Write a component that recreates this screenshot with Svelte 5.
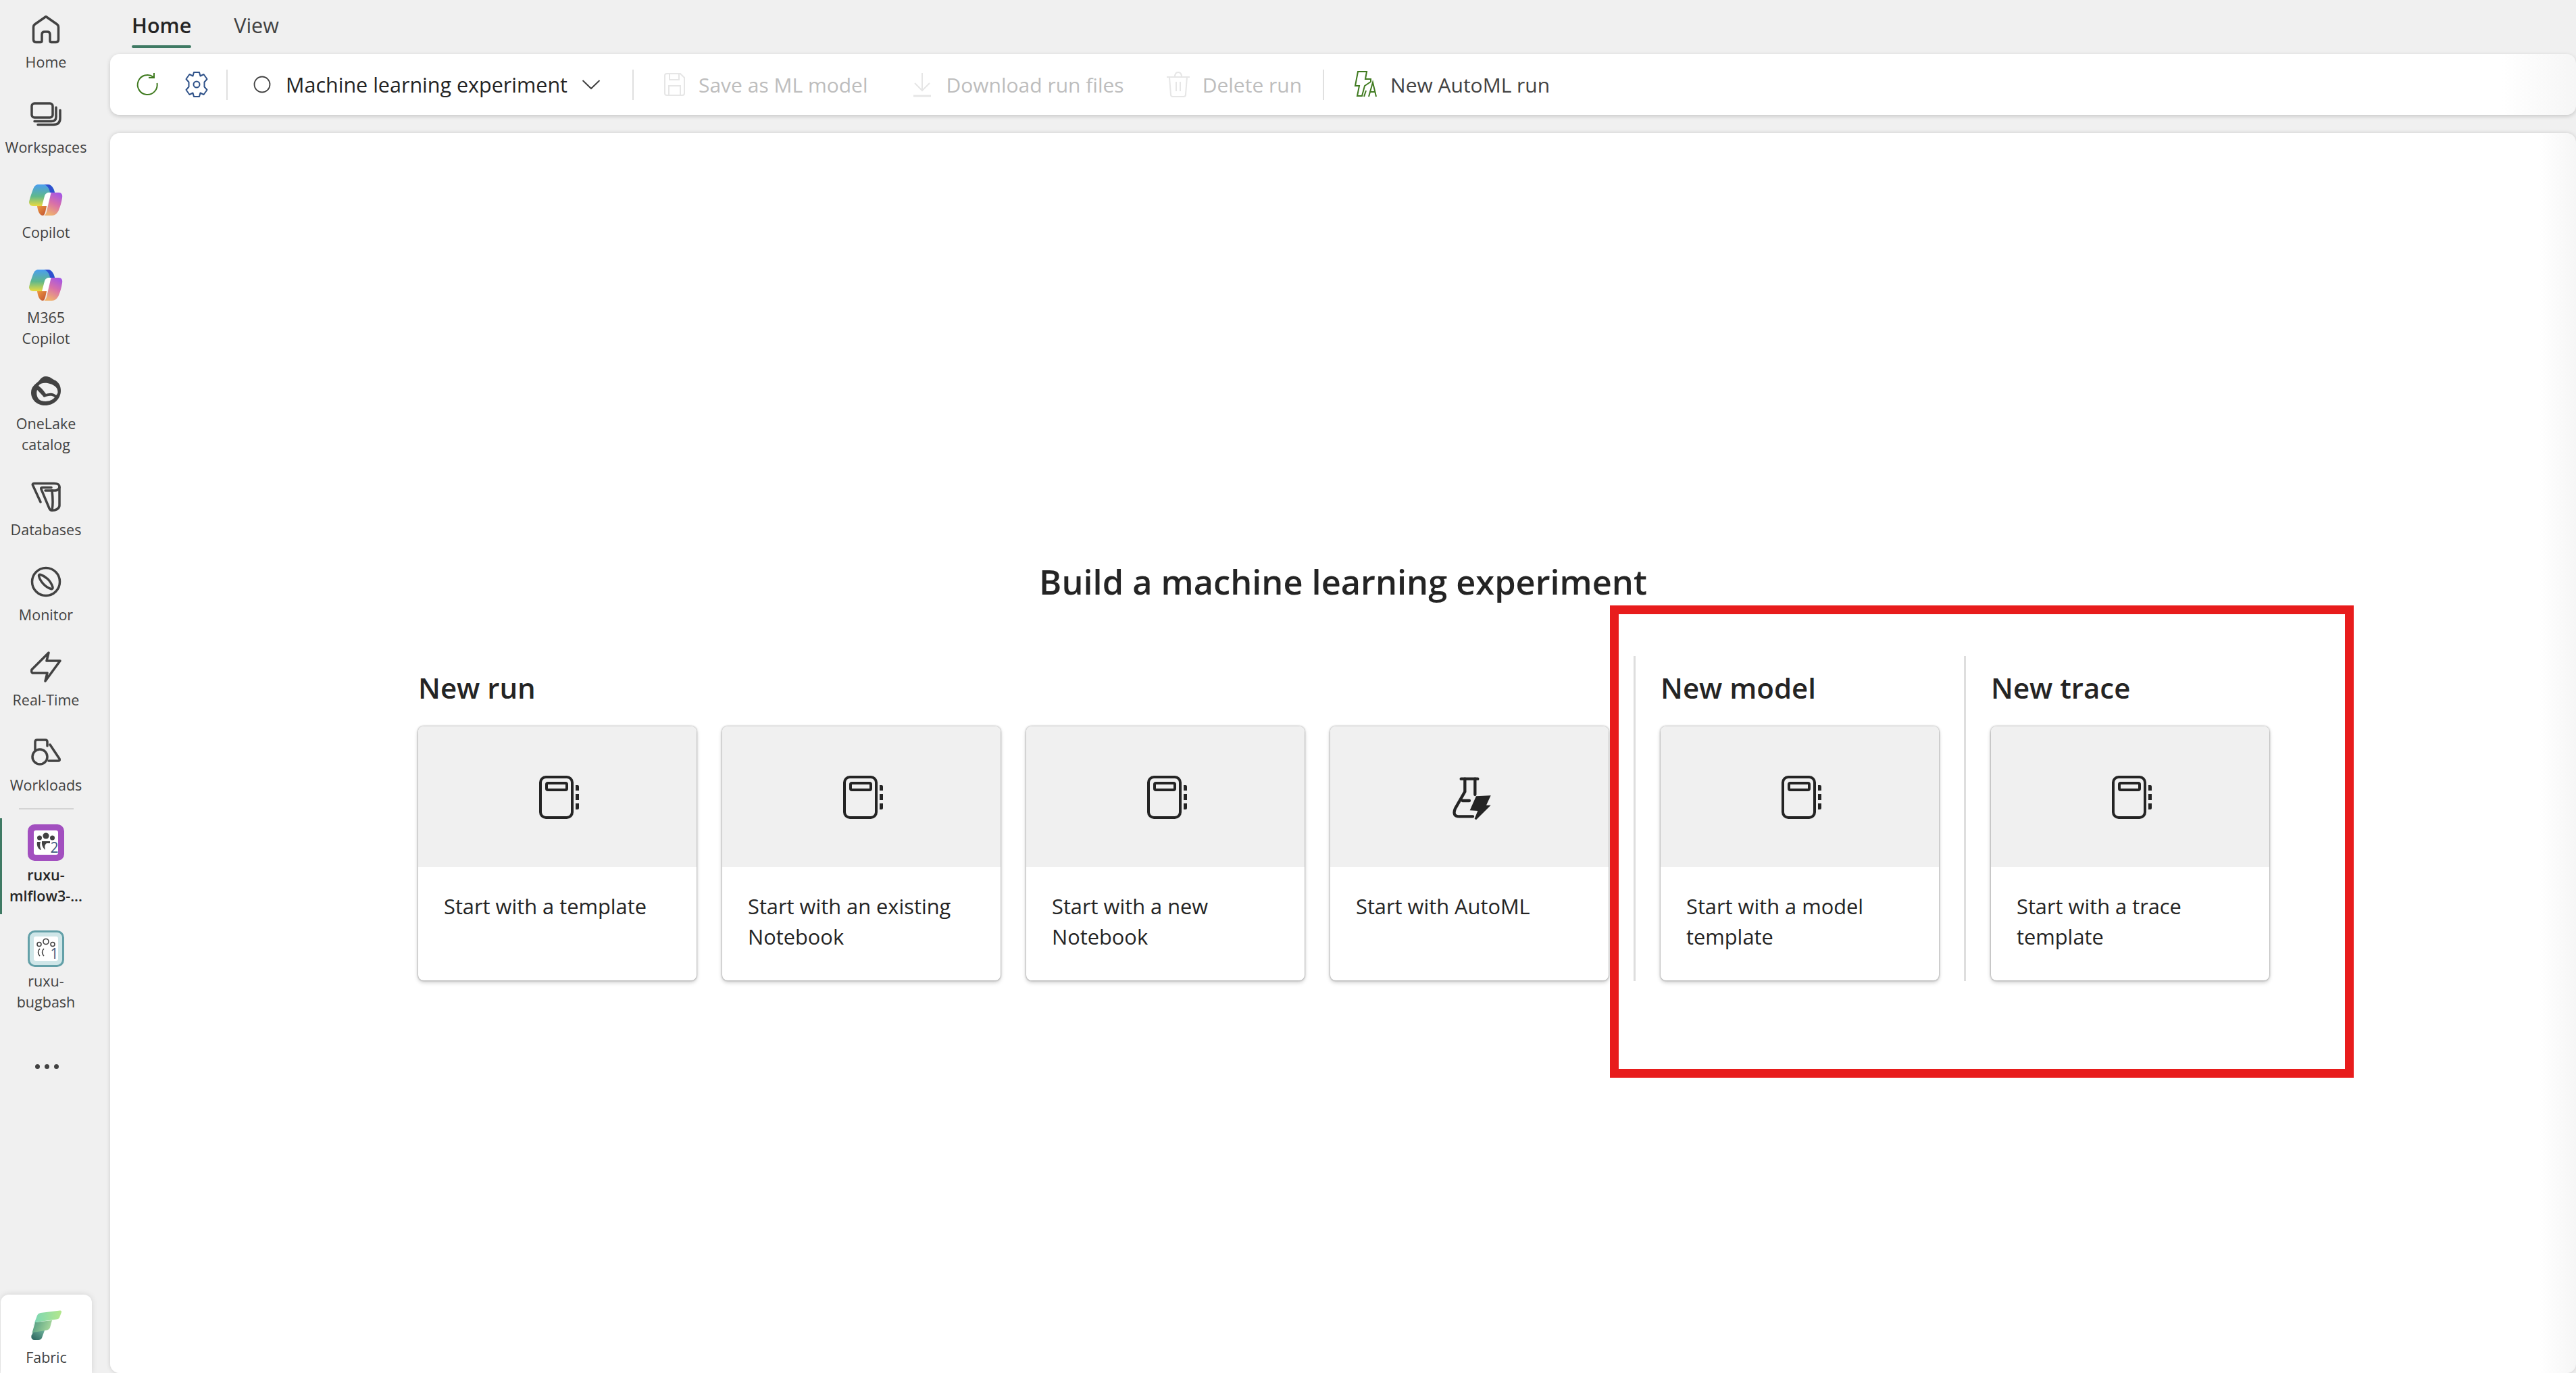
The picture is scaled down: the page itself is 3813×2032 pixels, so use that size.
<script>
    const navTop = [
        { id: "home", lines: ["Home"] },
        { id: "workspaces", lines: ["Workspaces"] },
        { id: "copilot", lines: ["Copilot"] },
        { id: "copilot", lines: ["M365", "Copilot"] },
        { id: "onelake", lines: ["OneLake", "catalog"] },
        { id: "databases", lines: ["Databases"] },
        { id: "monitor", lines: ["Monitor"] },
        { id: "realtime", lines: ["Real-Time"] },
        { id: "workloads", lines: ["Workloads"] },
    ];

    const sections = [
        {
            title: "New run",
            cards: [
                { icon: "notebook", text: "Start with a template" },
                { icon: "notebook", text: "Start with an existing Notebook" },
                { icon: "notebook", text: "Start with a new Notebook" },
                { icon: "flask", text: "Start with AutoML" },
            ],
        },
        {
            title: "New model",
            cards: [{ icon: "notebook", text: "Start with a model template" }],
        },
        {
            title: "New trace",
            cards: [{ icon: "notebook", text: "Start with a trace template" }],
        },
    ];
</script>

{#snippet copilotIcon(uid)}
    <svg width="50" height="47" viewBox="0 0 50 47">
        <defs>
            <linearGradient id="cpa{uid}" x1="0" y1="0" x2="0" y2="1">
                <stop offset="0" stop-color="#4a9df0" />
                <stop offset="0.55" stop-color="#5fb88c" />
                <stop offset="1" stop-color="#eadb3f" />
            </linearGradient>
            <linearGradient id="cpb{uid}" x1="0.8" y1="0" x2="0.4" y2="1">
                <stop offset="0" stop-color="#a355e6" />
                <stop offset="0.5" stop-color="#d970a8" />
                <stop offset="1" stop-color="#efb16e" />
            </linearGradient>
            <linearGradient id="cpc{uid}" x1="0" y1="0" x2="1" y2="1">
                <stop offset="0" stop-color="#ee9a40" />
                <stop offset="1" stop-color="#bf4f32" />
            </linearGradient>
        </defs>
        <path d="M24 13H33L27 33H19Z" fill="#fff" />
        <path d="M12 33H26L24 42C23 45 22 47 20 47C15 46 13 40 12 33Z" fill="url(#cpc{uid})" />
        <path d="M33 13H44C48 13 50 16 49 21C48 28 46 34 44 39C42 44 38 47 34 47H22C25 46 26 42 27 37L31 20C32 16 32 14 33 13Z" fill="url(#cpb{uid})" />
        <path d="M14 1H28C32 1 35 4 37 9L38 13H30C26 13 24 15 23 18L19 33H6C2 33 0 30 0 27C1 22 4 13 6 8C8 3 10 1 14 1Z" fill="url(#cpa{uid})" />
        <path d="M22 1H28C32 1 36 5 38 13H31C30 7 27 2 22 1Z" fill="#2f4fcf" />
    </svg>
{/snippet}

{#snippet navIcon(id, uid)}
    {#if id === "home"}
        <svg width="42" height="43" viewBox="0 0 42 43" class="line">
            <path d="M21 2.5L37.5 14Q39.5 15.5 39.5 18V36.5Q39.5 40.5 35.5 40.5H29Q27 40.5 27 38.5V29Q27 25 23 25H19Q15 25 15 29V38.5Q15 40.5 13 40.5H6.5Q2.5 40.5 2.5 36.5V18Q2.5 15.5 4.5 14Z" />
        </svg>
    {:else if id === "workspaces"}
        <svg width="46" height="36" viewBox="0 0 46 36" class="line">
            <rect x="2" y="2" width="31" height="21" rx="4" />
            <path d="M6 28.5H31Q38 28.5 38 22V8" />
            <path d="M11 33.5H34Q44 33.5 44 24V12" />
        </svg>
    {:else if id === "copilot"}
        {@render copilotIcon(uid)}
    {:else if id === "onelake"}
        <svg width="44" height="45" viewBox="0 0 44 45">
            <path d="M22 1C28 1 31 5 36 7C41 10 44 15 44 22C44 35 33 44 21 44C9 44 0 36 0 25C0 14 10 11 13 6C15 3 18 1 22 1Z" fill="#424242" />
            <path d="M11 15C14 10 22 10 28 12C35 14 40 18 39.500 25C39 27 38 28 37 29C32 24 26 26 22 27C18 21 14 17 11 15Z" fill="#f0f0f0" />
            <path d="M9 21C12 24 16 28 19 32C24 30 30 28 35 32C30 38 22 39 15 37C9 35 7 27 9 21Z" fill="#f0f0f0" />
        </svg>
    {:else if id === "databases"}
        <svg width="44" height="45" viewBox="0 0 44 45" class="line">
            <path d="M14 30L2.500 5Q1.500 2.500 5 2.500H34C40 2.500 42 4 42 8V35C42 40 36 42.500 31 42.500C29 42.500 28 41.500 27 39.500L15 11Q14 8.500 17 8.500H30" />
            <path d="M21 13H36Q41 12.500 42 8" />
            <path d="M31 13C32 22 33 32 31 42" />
        </svg>
    {:else if id === "monitor"}
        <svg width="46" height="46" viewBox="0 0 46 46" class="line">
            <circle cx="23" cy="23" r="20.5" />
            <path d="M12.5 14C12.5 12.5 13.5 12 15 12.5C22 14.5 30 21 33 31C33.5 33 32 34 30.5 33.5C22 31 14 22 12.5 14Z" />
        </svg>
    {:else if id === "realtime"}
        <svg width="46" height="46" viewBox="0 0 46 46" class="line">
            <path d="M2 27L27 2L24 14H44L22 44L25 32H3Q1 31 2 27Z" stroke-linejoin="round" />
        </svg>
    {:else if id === "workloads"}
        <svg width="44" height="40" viewBox="0 0 44 40" class="line">
            <path d="M6 17V5Q6 2 9 2H21Q24 2 24 5V11" />
            <circle cx="13" cy="27" r="11" />
            <path d="M28 9L42 30Q43 33 40 33H26" />
        </svg>
    {/if}
{/snippet}

{#snippet groupIcon(num, tone)}
    <svg width="54" height="54" viewBox="0 0 54 54">
        {#if tone === "purple"}
            <rect width="54" height="54" rx="10" fill="#a24fbf" />
            <rect x="9" y="9" width="36" height="36" rx="3" fill="#fff" />
            <circle cx="27" cy="17" r="4.6" fill="#424242" />
            <circle cx="17.5" cy="20" r="3.5" fill="#424242" />
            <circle cx="36.5" cy="20" r="3.5" fill="#424242" />
            <path d="M14 26H19Q17 32 20 38C15 37 13 31 14 26Z" fill="#424242" />
            <path d="M21 25H33V28H28Q24 30 26 38Q20 33 21 25Z" fill="#424242" />
        {:else}
            <rect x="1.5" y="1.5" width="51" height="51" rx="9" fill="#cfe6e8" stroke="#63a0a8" stroke-width="3" />
            <rect x="9" y="9" width="36" height="36" rx="3" fill="#fff" />
            <g fill="none" stroke="#424242" stroke-width="1.6">
                <circle cx="27" cy="16.5" r="4" />
                <circle cx="17" cy="20.5" r="3" />
                <circle cx="37" cy="20.5" r="3" />
                <path d="M18 27Q13 32 18 38" />
                <path d="M24 27Q19 32 24 38" />
            </g>
        {/if}
        <text x="33.5" y="42" class="group-num">{num}</text>
    </svg>
{/snippet}

{#snippet cardIcon(icon)}
    {#if icon === "notebook"}
        <svg width="66" height="66" viewBox="0 0 66 66" class="card-icon">
            <rect x="8" y="4" width="47" height="60" rx="8" />
            <rect x="17" y="13" width="30" height="10" rx="2" />
            <path d="M60 16H63Q65 16 65 18V24H60ZM60 29H65V38H60ZM60 43H65V50Q65 52 63 52H60Z" class="solid" />
        </svg>
    {:else}
        <svg width="100" height="80" viewBox="0 0 300 240" class="card-icon flask">
            <g transform="translate(15 3)">
                <path d="M98 38H172" />
                <path d="M115 38V95L72 170Q58 205 90 205H150" />
                <path d="M160 38V108" />
                <path d="M104 135H135" />
                <path d="M165 115L230 112L210 155H230L165 220L158 215L172 180L137 178Z" class="solid" />
            </g>
        </svg>
    {/if}
{/snippet}

<div class="shell">
    <aside class="sidebar">
        <nav class="nav-list">
            {#each navTop as item, i}
                <div class="nav-item">
                    <div class="nav-icon">{@render navIcon(item.id, i)}</div>
                    <div class="nav-label">
                        {#each item.lines as line}<div>{line}</div>{/each}
                    </div>
                </div>
            {/each}
        </nav>
        <div class="nav-divider"></div>
        <div class="nav-item active">
            <div class="nav-icon tall">{@render groupIcon("2", "purple")}</div>
            <div class="nav-label"><div>ruxu-</div><div>mlflow3-...</div></div>
        </div>
        <div class="nav-item second">
            <div class="nav-icon tall">{@render groupIcon("1", "teal")}</div>
            <div class="nav-label"><div>ruxu-</div><div>bugbash</div></div>
        </div>
        <div class="more"><span></span><span></span><span></span></div>
        <div class="fabric">
            <svg width="46" height="45" viewBox="0 0 46 45">
                <defs>
                    <linearGradient id="fa" x1="0" y1="0" x2="1" y2="0">
                        <stop offset="0" stop-color="#7ad6b6" />
                        <stop offset="1" stop-color="#b4e78c" />
                    </linearGradient>
                    <linearGradient id="fb" x1="0" y1="0" x2="1" y2="0.3">
                        <stop offset="0" stop-color="#4a9680" />
                        <stop offset="1" stop-color="#a8d89c" />
                    </linearGradient>
                    <linearGradient id="fc" x1="0" y1="1" x2="1" y2="0">
                        <stop offset="0" stop-color="#27605b" />
                        <stop offset="1" stop-color="#6fb39b" />
                    </linearGradient>
                </defs>
                <path d="M3 33Q6 29 20 30L16 41Q15 44 11 44H5Q0 44 0.3 38Z" fill="url(#fc)" />
                <path d="M6 18L31 15L28 26Q27 29 24 29.5L3 33Q1 34 .3 38Z" fill="url(#fb)" />
                <path d="M14 4L43 .5Q45.5 .5 45 3L42 11Q41 13 38 13.5L6 18Q4 20 3 24L9 8Q10 5 14 4Z" fill="url(#fa)" />
            </svg>
            <div class="nav-label"><div>Fabric</div></div>
        </div>
    </aside>

    <div class="content">
        <div class="tabs">
            <div class="tab active">Home<i></i></div>
            <div class="tab">View<i></i></div>
        </div>

        <div class="toolbar">
            <svg width="36" height="36" viewBox="0 0 36 36" class="tool-icon green">
                <path d="M27 7A14.500 14.500 0 1 0 32.500 16" />
                <path d="M28 1V8H20" />
            </svg>
            <svg width="38" height="40" viewBox="0 0 38 40" class="tool-icon blue gear">
                <path d="M15 2H23L24.5 7.5L29.5 5L34.5 12L30.5 16.5V23.5L34.5 28L29.5 35L24.5 32.5L23 38H15L13.5 32.5L8.5 35L3.5 28L7.5 23.5V16.5L3.5 12L8.5 5L13.5 7.5Z" stroke-linejoin="round" />
                <circle cx="19" cy="20" r="4.5" />
            </svg>
            <div class="sep first"></div>
            <div class="status">
                <svg width="28" height="28" viewBox="0 0 28 28"><circle cx="14" cy="14" r="11.5" fill="none" stroke="#424242" stroke-width="1.8" /></svg>
                <span class="exp-name">Machine learning experiment</span>
                <svg width="28" height="16" viewBox="0 0 28 16"><path d="M1.500 2L14 14L26.500 2" fill="none" stroke="#424242" stroke-width="2" /></svg>
            </div>
            <div class="sep"></div>
            <div class="tool disabled save">
                <svg width="36" height="36" viewBox="0 0 36 36" class="tool-icon grey">
                    <path d="M4 5Q4 2 7 2H27L33 8V31Q33 34 30 34H7Q4 34 4 31Z" />
                    <path d="M11 2V11H25V2M10 34V20H27V34" />
                </svg>
                <span>Save as ML model</span>
            </div>
            <div class="tool disabled">
                <svg width="36" height="38" viewBox="0 0 36 38" class="tool-icon grey">
                    <path d="M18 2V28M7 17L18 28L29 17" />
                    <path d="M5 36H31" stroke-width="3" />
                </svg>
                <span>Download run files</span>
            </div>
            <div class="tool disabled">
                <svg width="36" height="40" viewBox="0 0 36 40" class="tool-icon grey">
                    <path d="M1 9H35M13 9Q13 2 18 2Q23 2 23 9M5 9L7 35Q7 38 10 38H26Q29 38 29 35L31 9M15 16V30M21 16V30" />
                </svg>
                <span>Delete run</span>
            </div>
            <div class="sep tight"></div>
            <div class="tool automl">
                <svg width="36" height="40" viewBox="0 0 36 40" class="tool-icon green">
                    <path d="M6 1H19L17 12H25V16L16 22L12 37H5L8 22H2Z" />
                    <path d="M15 38L18 29M33 38L28 17L22 38M24 31H31" />
                </svg>
                <span>New AutoML run</span>
            </div>
        </div>

        <main class="canvas">
            <h1>Build a machine learning experiment</h1>
            <div class="sections">
                {#each sections as section, i}
                    <section class:divided={i > 0}>
                        <h2>{section.title}</h2>
                        <div class="cards">
                            {#each section.cards as card}
                                <div class="card">
                                    <div class="card-top">{@render cardIcon(card.icon)}</div>
                                    <div class="card-text">{card.text}</div>
                                </div>
                            {/each}
                        </div>
                    </section>
                {/each}
            </div>
        </main>
    </div>

    <div class="callout"></div>
</div>

<style>
    :global(body) {
        margin: 0;
        background: #f0f0f0;
        font-family: "Open Sans", "Liberation Sans", sans-serif;
        color: #242424;
    }

    .shell {
        display: flex;
        height: 2032px;
        overflow: hidden;
        position: relative;
    }

    .sidebar {
        width: 163px;
        flex: none;
        display: flex;
        flex-direction: column;
        align-items: flex-start;
        padding-top: 19px;
        box-sizing: border-box;
    }

    .nav-list {
        display: flex;
        flex-direction: column;
        row-gap: 38px;
    }

    .nav-item {
        display: flex;
        flex-direction: column;
        align-items: center;
        position: relative;
        width: 136px;
    }

    .nav-icon {
        height: 48px;
        display: flex;
        align-items: center;
        justify-content: center;
        margin-bottom: 9px;
    }

    .nav-icon.tall {
        height: 54px;
        margin-bottom: 5px;
    }

    .nav-label {
        font-size: 21.5px;
        line-height: 31px;
        text-align: center;
        color: #424242;
        white-space: nowrap;
    }

    .line {
        fill: none;
        stroke: #424242;
        stroke-width: 3.5;
        stroke-linejoin: round;
        stroke-linecap: round;
    }

    .nav-divider {
        width: 81px;
        height: 2px;
        background: #d4d4d4;
        margin: 19px 0 22px 28px;
        flex: none;
    }

    .nav-item.active .nav-label {
        font-weight: 600;
        color: #242424;
    }

    .nav-item.active::before {
        content: "";
        position: absolute;
        left: 0;
        top: -9px;
        bottom: -12px;
        width: 3px;
        background: #3f7a64;
    }

    .nav-item.second {
        margin-top: 36px;
    }

    .group-num {
        font-family: "Open Sans", sans-serif;
        font-size: 21px;
        fill: #3d5a80;
    }

    .more {
        display: flex;
        column-gap: 7px;
        margin: 77px 0 0 52px;
    }

    .more span {
        width: 7px;
        height: 7px;
        border-radius: 50%;
        background: #424242;
    }

    .fabric {
        margin: auto 0 0 1px;
        width: 135px;
        height: 116px;
        flex: none;
        background: #fff;
        border-radius: 12px 12px 0 0;
        box-shadow: 0 0 10px rgba(0, 0, 0, 0.12);
        display: flex;
        flex-direction: column;
        align-items: center;
        padding-top: 23px;
        row-gap: 9px;
        box-sizing: border-box;
    }

    .content {
        flex: 1;
        min-width: 0;
        display: flex;
        flex-direction: column;
    }

    .tabs {
        height: 80px;
        flex: none;
        display: flex;
        column-gap: 53px;
        padding: 13px 0 0 27px;
        box-sizing: border-box;
    }

    .tab {
        padding: 0 5px;
        font-size: 30.5px;
        line-height: 49px;
        color: #424242;
    }

    .tab.active {
        font-weight: 600;
        color: #242424;
    }

    .tab i {
        display: block;
        height: 4px;
        margin-top: 5px;
        border-radius: 2px;
    }

    .tab.active i {
        background: #3f7a64;
    }

    .toolbar {
        height: 90px;
        flex: none;
        display: flex;
        align-items: center;
        background: linear-gradient(90deg, #fff 97%, #f6f6f6 100%);
        border-radius: 14px;
        box-shadow: 0 2px 6px rgba(0, 0, 0, 0.18);
        padding-left: 37px;
        font-size: 30px;
        color: #424242;
    }

    .tool-icon {
        fill: none;
        stroke-width: 2;
        flex: none;
    }

    .tool-icon.green {
        stroke: #3f7a1f;
    }

    .tool-icon.blue {
        stroke: #2f5289;
    }

    .tool-icon.grey {
        stroke: #e6e6e6;
    }

    .gear {
        margin-left: 36px;
    }

    .sep {
        width: 2px;
        height: 45px;
        background: #e0e0e0;
        flex: none;
        margin: 0 42px 0 25px;
    }

    .sep.first {
        margin-right: 37px;
    }

    .sep.tight {
        margin: 0 44px 0 31px;
    }

    .status {
        display: flex;
        align-items: center;
        column-gap: 21px;
        margin-right: 47px;
    }

    .status + .sep {
        margin-left: 0;
    }

    .exp-name {
        font-size: 30.5px;
        font-weight: 500;
        color: #242424;
        white-space: nowrap;
    }

    .tool {
        display: flex;
        align-items: center;
        column-gap: 18px;
        margin-right: 62px;
        white-space: nowrap;
    }

    .tool:has(+ .sep) {
        margin-right: 0;
    }

    .tool.disabled {
        color: #bdbdbd;
    }

    .canvas {
        flex: 1;
        margin-top: 27px;
        background: linear-gradient(90deg, #fff 98.5%, #f6f6f6 100%);
        border-radius: 14px;
        box-shadow: 0 0 6px rgba(0, 0, 0, 0.16);
        display: flex;
        flex-direction: column;
        align-items: center;
        padding-top: 631px;
        box-sizing: border-box;
    }

    h1 {
        margin: 0;
        font-size: 50.5px;
        line-height: 66px;
        font-weight: 600;
        color: #242424;
    }

    .sections {
        display: flex;
        margin: 77px 0 0 2px;
    }

    section {
        display: flex;
        flex-direction: column;
        height: 481px;
    }

    section.divided {
        border-left: 3px solid #dedede;
        padding-left: 37px;
        margin-left: 37px;
    }

    h2 {
        margin: 0 0 10px;
        font-size: 42px;
        line-height: 94px;
        font-weight: 600;
        color: #242424;
    }

    .cards {
        display: flex;
        column-gap: 38px;
    }

    .card {
        width: 412px;
        height: 376px;
        background: #fff;
        border-radius: 8px;
        box-shadow: 0 0 3px rgba(0, 0, 0, 0.45), 0 3px 6px rgba(0, 0, 0, 0.2);
        overflow: hidden;
        box-sizing: border-box;
    }

    .card-top {
        height: 208px;
        background: #f0f0f0;
        display: flex;
        align-items: center;
        justify-content: center;
    }

    .card-icon {
        fill: none;
        stroke: #242424;
        stroke-width: 4;
    }

    .card-icon.flask {
        stroke-width: 13;
        stroke-linecap: round;
        stroke-linejoin: round;
    }

    .card-icon .solid {
        fill: #242424;
        stroke: none;
    }

    .card-text {
        padding: 36px 38px 0;
        font-size: 30.8px;
        line-height: 45px;
        font-weight: 500;
        color: #242424;
    }

    .callout {
        position: absolute;
        left: 2383px;
        top: 896px;
        width: 1101px;
        height: 699px;
        border: 13px solid #e81c1c;
        box-sizing: border-box;
    }
</style>
